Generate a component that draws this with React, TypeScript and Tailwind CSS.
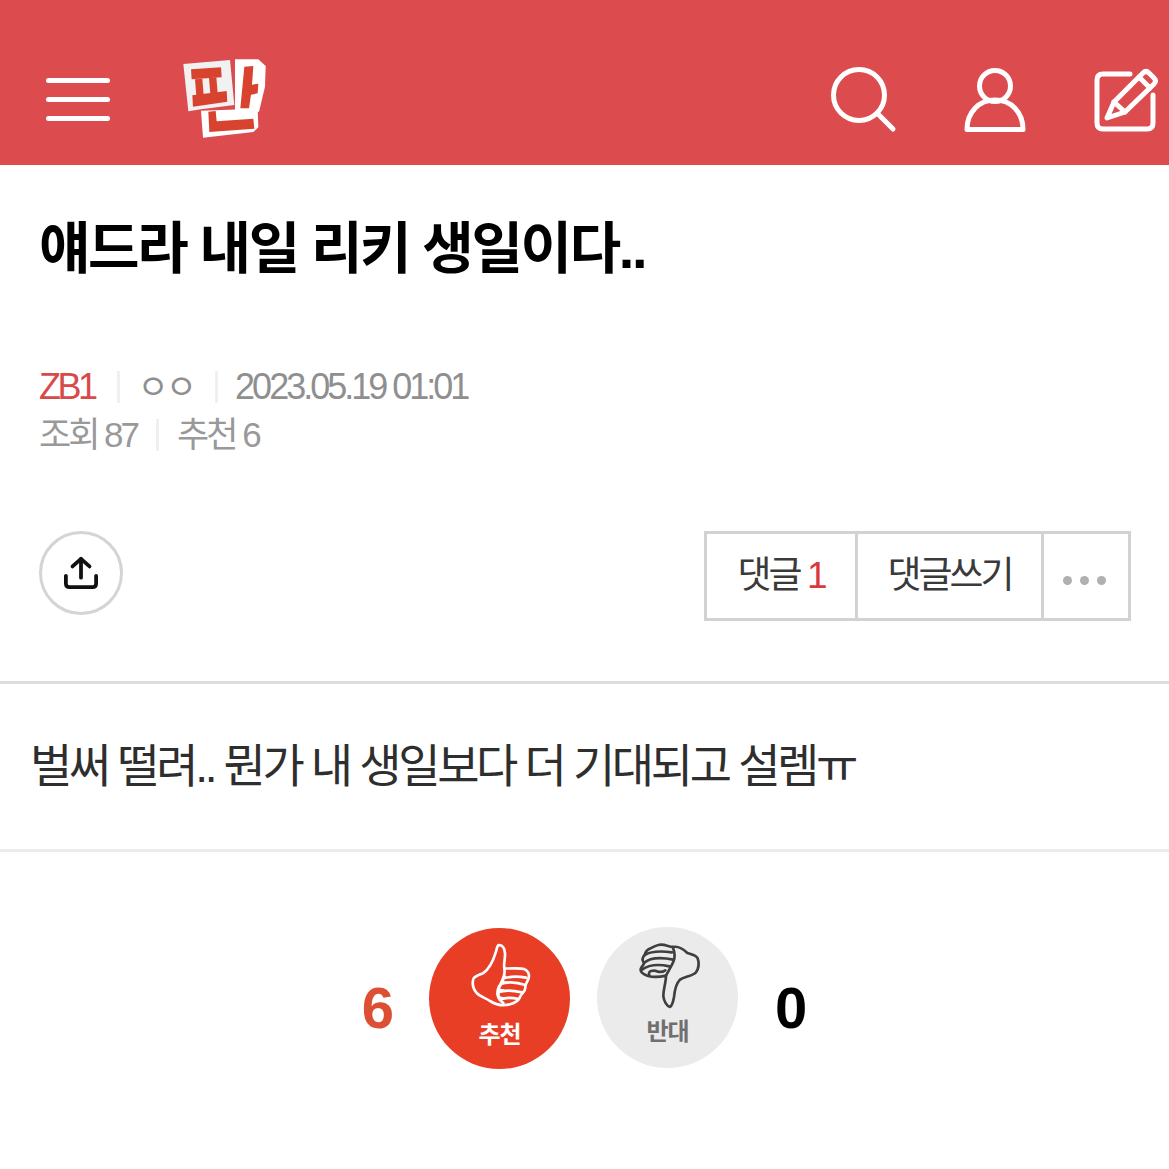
const KR = "font-['Liberation_Sans','Noto_Sans_CJK_KR',sans-serif]";

function Logo() {
  return (
    <svg width="100" height="95" viewBox="0 0 300 285" className="mt-[-6px]">
      <polygon points="25,42 165,30 178,165 78,178 40,184" fill="#f1f1f2" />
      <polygon points="180,28 250,28 272,48 270,110 252,185 180,185" fill="#ffffff" />
      <polygon points="78,182 248,176 250,232 235,246 84,263" fill="#ffffff" />
      <g fill="#d7432f">
        <polygon points="48,58 138,52 140,82 50,88" />
        <polygon points="60,88 82,86 86,136 64,138" />
        <polygon points="102,84 124,82 128,130 106,132" />
        <polygon points="52,136 155,123 157,155 54,170" />
        <polygon points="208,50 235,48 231,104 250,101 248,130 228,134 222,175 196,175" />
        <polygon points="100,185 122,183 125,214 235,206 238,236 103,246" />
      </g>
    </svg>
  );
}

function ThumbUp() {
  return (
    <svg width="80" height="80" viewBox="0 0 240 240" fill="none" stroke="#fff" strokeWidth="8" strokeLinejoin="round" strokeLinecap="round">
      <path d="M116 30 C126 30 134 38 135 55 C136 72 130 88 133 100 C150 102 176 98 192 102 C204 106 210 118 205 132 C202 142 195 146 196 158 C196 170 184 174 180 186 C176 198 164 204 150 208 C128 214 106 208 90 198 C78 190 60 184 50 174 C40 162 36 146 40 132 C44 122 58 120 70 114 C86 104 100 76 108 50 C110 40 112 32 116 30 Z" />
      <path d="M133 100 C136 116 130 132 122 146 C114 158 110 172 114 184 C116 192 122 198 130 204" />
      <path d="M132 130 C150 124 176 124 198 128 M125 146 C146 140 172 142 196 150 M114 172 C134 164 160 166 186 172 M120 194 C136 186 158 188 176 192" />
      <path d="M134 124 C124 134 128 144 140 144 M122 150 C112 160 118 168 130 166 M116 176 C112 186 120 190 130 190" />
    </svg>
  );
}

function ThumbDown() {
  return (
    <svg width="80" height="80" viewBox="0 0 240 240" fill="none" stroke="#3f3f3f" strokeWidth="8" strokeLinejoin="round" strokeLinecap="round" className="ml-[5px]">
      <path d="M85 30 C100 26 114 34 128 36 C146 32 160 42 172 54 C184 58 198 60 203 70 C208 84 206 100 198 112 C186 124 164 124 150 134 C138 146 134 166 132 186 C130 198 126 212 120 216 C110 214 102 198 100 184 C100 162 108 142 108 122 C90 126 70 128 52 122 C40 118 30 112 32 102 C34 94 42 90 42 84 C36 76 36 68 44 60 C46 50 52 44 62 40 C70 36 76 32 85 30 Z" />
      <path d="M128 36 C134 50 136 66 130 80 C124 94 116 106 108 122" />
      <path d="M44 60 C64 48 96 48 126 52 M42 84 C62 66 100 68 130 74 M36 104 C58 88 90 88 118 94 M58 120 C52 108 70 104 84 110 C92 112 100 110 106 106" />
    </svg>
  );
}

export default function App() {
  return (
    <div className={`w-[1169px] h-[1169px] bg-white overflow-hidden ${KR}`}>
      <header className="h-[165px] bg-[#dc4c4e] flex items-center pl-[46px] pr-[11px] pt-[36px] text-white">
        <div className="flex flex-col gap-[14px] w-[64px] mt-[-3px]">
          <span className="h-[5px] rounded-full bg-white" />
          <span className="h-[5px] rounded-full bg-white" />
          <span className="h-[5px] rounded-full bg-white" />
        </div>
        <div className="ml-[65px]"><Logo /></div>
        <div className="ml-auto flex items-center mt-[-2px]">
          <svg width="66" height="66" viewBox="0 0 66 66" fill="none" stroke="white" strokeWidth="5" strokeLinecap="round">
            <circle cx="28" cy="28" r="25.5" />
            <path d="M46 46 L62 62" />
          </svg>
          <svg className="ml-[67px]" width="62" height="66" viewBox="0 0 62 66" fill="none" stroke="white" strokeWidth="5" strokeLinejoin="round">
            <circle cx="31" cy="19" r="15.5" />
            <path d="M3 62.5 C3 45 15 33 31 33 C47 33 59 45 59 62.5 Z" />
          </svg>
          <svg className="ml-[68px]" width="64" height="66" viewBox="0 0 64 66" fill="none" stroke="white" strokeWidth="5" strokeLinecap="round" strokeLinejoin="round">
            <path d="M36 7 H9 Q3 7 3 13 V56 Q3 62 9 62 H53 Q59 62 59 56 V28" />
            <path d="M13 51 L20 35 L49 6 Q52 3 55 6 L60 11 Q63 14 60 17 L31 45 Z" />
            <path d="M45 10 L56 21" />
            <path d="M20 35 L31 45" />
          </svg>
        </div>
      </header>

      <section className="h-[519px] px-[39px] flex flex-col border-b-[3px] border-[#dddddd]">
        <h1 className="mt-[48px] text-[56px] leading-[72px] font-bold tracking-[-2.4px] text-black whitespace-nowrap">얘드라 내일 리키 생일이다..</h1>
        <div className="mt-[78px] h-[48px] flex items-center text-[36px] tracking-[-3px] text-[#8f8f8f] whitespace-nowrap">
          <span className="text-[#d84a4a] tracking-[-3.5px]">ZB1</span>
          <span className="ml-[22px] mr-[18px] w-[3px] h-[32px] bg-[#f0f0f0]" />
          <span className="text-[34px]">ㅇㅇ</span>
          <span className="ml-[21px] mr-[17px] w-[3px] h-[32px] bg-[#f0f0f0]" />
          <span>2023.05.19 01:01</span>
        </div>
        <div className="h-[48px] flex items-center text-[35px] tracking-[-3px] text-[#999999] whitespace-nowrap">
          <span>조회 87</span>
          <span className="ml-[19px] mr-[18px] w-[3px] h-[32px] bg-[#f0f0f0]" />
          <span>추천 6</span>
        </div>
        <div className="mt-[72px] flex items-start justify-between mr-[-1px]">
          <button className="w-[84px] h-[84px] rounded-full border-[3px] border-[#d4d4d4] flex items-center justify-center">
            <svg width="36" height="34" viewBox="0 0 38 36" fill="none" stroke="#111" strokeWidth="4" strokeLinecap="round" strokeLinejoin="round">
              <path d="M19 3 V23" />
              <path d="M10 11 L19 3 L28 11" />
              <path d="M3 21 V29 Q3 33 7 33 H31 Q35 33 35 29 V21" />
            </svg>
          </button>
          <div className="flex h-[90px] border-[3px] border-[#d2d2d2] text-[37px] tracking-[-3px] text-[#3a3a3a]">
            <div className="w-[148px] flex items-center justify-center whitespace-nowrap">댓글&nbsp;<span className="text-[#d9393b]">1</span></div>
            <div className="w-[186px] border-l-[3px] border-[#d2d2d2] flex items-center justify-center whitespace-nowrap">댓글쓰기</div>
            <div className="w-[87px] border-l-[3px] border-[#d2d2d2] flex items-center justify-center gap-[8px] pt-[8px] pr-[4px]">
              <span className="w-[9px] h-[9px] rounded-full bg-[#b0b0b0]" />
              <span className="w-[9px] h-[9px] rounded-full bg-[#b0b0b0]" />
              <span className="w-[9px] h-[9px] rounded-full bg-[#b0b0b0]" />
            </div>
          </div>
        </div>
      </section>

      <section className="h-[168px] px-[30px] flex items-center border-b-[3px] border-[#ececec] text-[46px] tracking-[-3.36px] text-[#2e2e2e] whitespace-nowrap">
        벌써 떨려.. 뭔가 내 생일보다 더 기대되고 설렘ㅠ
      </section>

      <section className="mt-[75px] flex items-center justify-center gap-[27px]">
        <span className="mr-[8px] mt-[18px] text-[58px] font-bold text-[#dc4f33]">6</span>
        <button className="mt-[1px] w-[141px] h-[141px] rounded-full bg-[#e93e26] flex flex-col items-center justify-start pt-[7px] text-white">
          <ThumbUp />
          <span className="mt-[4px] text-[24px] leading-[32px] font-bold tracking-[-1px]">추천</span>
        </button>
        <button className="mb-[1px] w-[141px] h-[141px] rounded-full bg-[#ebebeb] flex flex-col items-center justify-start pt-[8px] text-[#707070]">
          <ThumbDown />
          <span className="mt-[1px] text-[24px] leading-[32px] font-bold tracking-[-1px]">반대</span>
        </button>
        <span className="ml-[10px] mt-[18px] text-[58px] font-bold text-black">0</span>
      </section>
    </div>
  );
}
